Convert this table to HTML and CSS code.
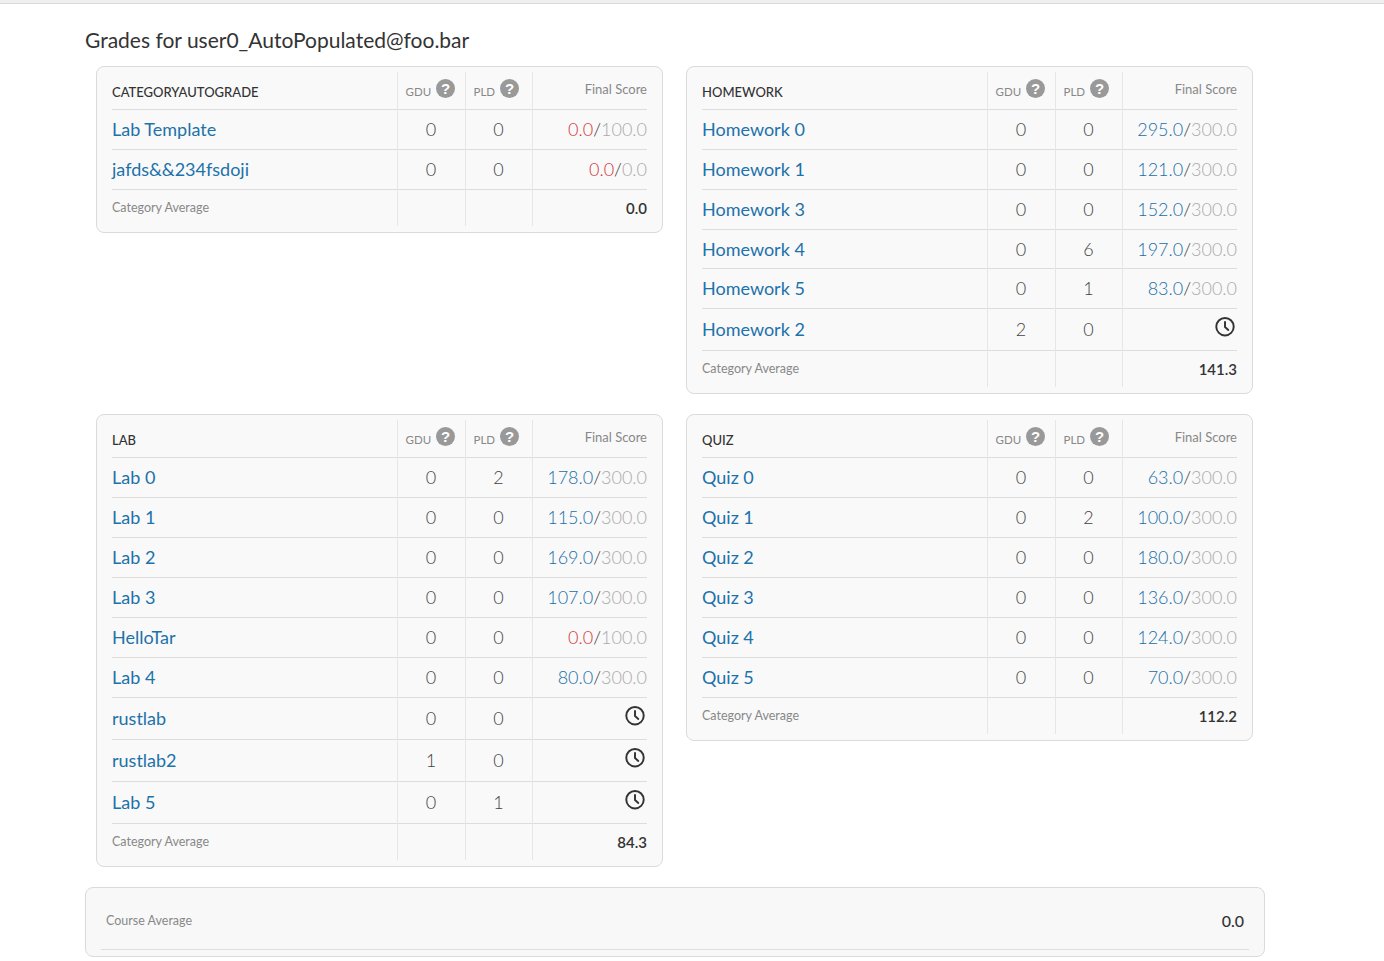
FILE: index.html
```html
<!DOCTYPE html>
<html>
<head>
<meta charset="utf-8">
<title>Grades</title>
<link rel="stylesheet" href="styles.css">
</head>
<body>
<div class="topbar"></div>
<div class="page">
  <h1 class="title">Grades for user0_AutoPopulated@foo.bar</h1>
  <div class="cards">

    <div class="card">
      <table class="grades">
        <colgroup><col class="c-name"><col class="c-gdu"><col class="c-pld"><col class="c-final"></colgroup>
        <thead><tr><th class="cat">CATEGORYAUTOGRADE</th><th class="hint">GDU <span class="q">?</span></th><th class="hint">PLD <span class="q">?</span></th><th class="final">Final Score</th></tr></thead>
        <tbody>
          <tr><td><a>Lab Template</a></td><td class="num">0</td><td class="num">0</td><td class="score"><span class="bad">0.0</span>/<span class="max">100.0</span></td></tr>
          <tr><td><a>jafds&amp;&amp;234fsdoji</a></td><td class="num">0</td><td class="num">0</td><td class="score"><span class="bad">0.0</span>/<span class="max">0.0</span></td></tr>
        </tbody>
        <tfoot><tr><td class="avg-label">Category Average</td><td></td><td></td><td class="avg-val">0.0</td></tr></tfoot>
      </table>
    </div>

    <div class="card">
      <table class="grades">
        <colgroup><col class="c-name"><col class="c-gdu"><col class="c-pld"><col class="c-final"></colgroup>
        <thead><tr><th class="cat">HOMEWORK</th><th class="hint">GDU <span class="q">?</span></th><th class="hint">PLD <span class="q">?</span></th><th class="final">Final Score</th></tr></thead>
        <tbody>
          <tr><td><a>Homework 0</a></td><td class="num">0</td><td class="num">0</td><td class="score"><span class="ok">295.0</span>/<span class="max">300.0</span></td></tr>
          <tr><td><a>Homework 1</a></td><td class="num">0</td><td class="num">0</td><td class="score"><span class="ok">121.0</span>/<span class="max">300.0</span></td></tr>
          <tr><td><a>Homework 3</a></td><td class="num">0</td><td class="num">0</td><td class="score"><span class="ok">152.0</span>/<span class="max">300.0</span></td></tr>
          <tr><td><a>Homework 4</a></td><td class="num">0</td><td class="num">6</td><td class="score"><span class="ok">197.0</span>/<span class="max">300.0</span></td></tr>
          <tr><td><a>Homework 5</a></td><td class="num">0</td><td class="num">1</td><td class="score"><span class="ok">83.0</span>/<span class="max">300.0</span></td></tr>
          <tr><td><a>Homework 2</a></td><td class="num">2</td><td class="num">0</td><td class="score pending"><svg class="clock" viewBox="0 0 24 26" width="24" height="26"><circle cx="12" cy="10" r="9" fill="none" stroke="#333" stroke-width="2"/><path d="M12 5.2V10.4L15.4 13.4" fill="none" stroke="#333" stroke-width="2" stroke-linecap="round" stroke-linejoin="round"/></svg></td></tr>
        </tbody>
        <tfoot><tr><td class="avg-label">Category Average</td><td></td><td></td><td class="avg-val">141.3</td></tr></tfoot>
      </table>
    </div>

    <div class="card">
      <table class="grades">
        <colgroup><col class="c-name"><col class="c-gdu"><col class="c-pld"><col class="c-final"></colgroup>
        <thead><tr><th class="cat">LAB</th><th class="hint">GDU <span class="q">?</span></th><th class="hint">PLD <span class="q">?</span></th><th class="final">Final Score</th></tr></thead>
        <tbody>
          <tr><td><a>Lab 0</a></td><td class="num">0</td><td class="num">2</td><td class="score"><span class="ok">178.0</span>/<span class="max">300.0</span></td></tr>
          <tr><td><a>Lab 1</a></td><td class="num">0</td><td class="num">0</td><td class="score"><span class="ok">115.0</span>/<span class="max">300.0</span></td></tr>
          <tr><td><a>Lab 2</a></td><td class="num">0</td><td class="num">0</td><td class="score"><span class="ok">169.0</span>/<span class="max">300.0</span></td></tr>
          <tr><td><a>Lab 3</a></td><td class="num">0</td><td class="num">0</td><td class="score"><span class="ok">107.0</span>/<span class="max">300.0</span></td></tr>
          <tr><td><a>HelloTar</a></td><td class="num">0</td><td class="num">0</td><td class="score"><span class="bad">0.0</span>/<span class="max">100.0</span></td></tr>
          <tr><td><a>Lab 4</a></td><td class="num">0</td><td class="num">0</td><td class="score"><span class="ok">80.0</span>/<span class="max">300.0</span></td></tr>
          <tr><td><a>rustlab</a></td><td class="num">0</td><td class="num">0</td><td class="score pending"><svg class="clock" viewBox="0 0 24 26" width="24" height="26"><circle cx="12" cy="10" r="9" fill="none" stroke="#333" stroke-width="2"/><path d="M12 5.2V10.4L15.4 13.4" fill="none" stroke="#333" stroke-width="2" stroke-linecap="round" stroke-linejoin="round"/></svg></td></tr>
          <tr><td><a>rustlab2</a></td><td class="num">1</td><td class="num">0</td><td class="score pending"><svg class="clock" viewBox="0 0 24 26" width="24" height="26"><circle cx="12" cy="10" r="9" fill="none" stroke="#333" stroke-width="2"/><path d="M12 5.2V10.4L15.4 13.4" fill="none" stroke="#333" stroke-width="2" stroke-linecap="round" stroke-linejoin="round"/></svg></td></tr>
          <tr><td><a>Lab 5</a></td><td class="num">0</td><td class="num">1</td><td class="score pending"><svg class="clock" viewBox="0 0 24 26" width="24" height="26"><circle cx="12" cy="10" r="9" fill="none" stroke="#333" stroke-width="2"/><path d="M12 5.2V10.4L15.4 13.4" fill="none" stroke="#333" stroke-width="2" stroke-linecap="round" stroke-linejoin="round"/></svg></td></tr>
        </tbody>
        <tfoot><tr><td class="avg-label">Category Average</td><td></td><td></td><td class="avg-val">84.3</td></tr></tfoot>
      </table>
    </div>

    <div class="card">
      <table class="grades">
        <colgroup><col class="c-name"><col class="c-gdu"><col class="c-pld"><col class="c-final"></colgroup>
        <thead><tr><th class="cat">QUIZ</th><th class="hint">GDU <span class="q">?</span></th><th class="hint">PLD <span class="q">?</span></th><th class="final">Final Score</th></tr></thead>
        <tbody>
          <tr><td><a>Quiz 0</a></td><td class="num">0</td><td class="num">0</td><td class="score"><span class="ok">63.0</span>/<span class="max">300.0</span></td></tr>
          <tr><td><a>Quiz 1</a></td><td class="num">0</td><td class="num">2</td><td class="score"><span class="ok">100.0</span>/<span class="max">300.0</span></td></tr>
          <tr><td><a>Quiz 2</a></td><td class="num">0</td><td class="num">0</td><td class="score"><span class="ok">180.0</span>/<span class="max">300.0</span></td></tr>
          <tr><td><a>Quiz 3</a></td><td class="num">0</td><td class="num">0</td><td class="score"><span class="ok">136.0</span>/<span class="max">300.0</span></td></tr>
          <tr><td><a>Quiz 4</a></td><td class="num">0</td><td class="num">0</td><td class="score"><span class="ok">124.0</span>/<span class="max">300.0</span></td></tr>
          <tr><td><a>Quiz 5</a></td><td class="num">0</td><td class="num">0</td><td class="score"><span class="ok">70.0</span>/<span class="max">300.0</span></td></tr>
        </tbody>
        <tfoot><tr><td class="avg-label">Category Average</td><td></td><td></td><td class="avg-val">112.2</td></tr></tfoot>
      </table>
    </div>

  </div>

  <div class="course">
    <table class="course-table">
      <tr><td class="course-label">Course Average</td><td class="course-val">0.0</td></tr>
    </table>
  </div>
</div>
</body>
</html>
```

FILE: styles.css
```css
* { box-sizing: border-box; }

html, body {
  margin: 0;
  padding: 0;
  background: #ffffff;
  font-family: "Lato", "Noto Sans", "Liberation Sans", sans-serif;
  color: #333333;
}

.topbar {
  height: 4px;
  background: #efefef;
  border-bottom: 1px solid #d9d9d9;
}

.page {
  width: 1180px;
  margin-left: 85px;
}

.title {
  margin: 22px 0 12px 0;
  font-size: 21px;
  line-height: 28px;
  font-weight: 400;
  color: #333333;
}

.cards {
  display: grid;
  grid-template-columns: 567px 567px;
  column-gap: 23px;
  row-gap: 20px;
  align-items: start;
  margin-left: 11px;
}

.card {
  background: #f9f9f9;
  border: 1px solid #dadada;
  border-radius: 8px;
  padding: 5px 15px 6px 15px;
}

.grades {
  width: 100%;
  table-layout: fixed;
  border-collapse: collapse;
}

.c-name { width: 285px; }
.c-gdu { width: 68px; }
.c-pld { width: 67px; }
.c-final { width: 115px; }

.grades th,
.grades td {
  padding: 8px 8px;
  vertical-align: middle;
  white-space: nowrap;
}

.grades th + th,
.grades td + td {
  border-left: 1px solid #e6e6e6;
}

.grades th:first-child,
.grades td:first-child { padding-left: 0; }

.grades th:last-child,
.grades td:last-child { padding-right: 0; }

.grades thead tr,
.grades tbody tr {
  border-bottom: 1px solid #dddddd;
}

.grades th {
  text-align: left;
  font-weight: 400;
  line-height: 20px;
  height: 37px;
}

.grades th.cat {
  font-size: 13px;
  color: #333333;
  font-weight: 500;
  padding-top: 10px;
  padding-bottom: 7px;
}

.grades th.hint {
  font-size: 11.5px;
  color: #888888;
  padding-top: 10px;
  padding-bottom: 7px;
}

.q {
  display: inline-block;
  width: 19px;
  height: 19px;
  border-radius: 50%;
  background: #999999;
  color: #ffffff;
  font-family: "Liberation Sans", sans-serif;
  font-size: 15px;
  font-weight: 700;
  line-height: 19px;
  text-align: center;
  vertical-align: 2px;
  margin: -6px 0 -6px 2px;
}

.grades th.final {
  text-align: right;
  font-size: 13px;
  color: #888888;
  padding-top: 7px;
  padding-bottom: 10px;
}

.grades tbody td {
  font-size: 18px;
  line-height: 22.86px;
  font-weight: 300;
}

.grades a {
  color: #1c72aa;
  font-weight: 400;
  text-decoration: none;
}

.grades td.num {
  text-align: center;
  color: #444444;
}

.grades td.score {
  text-align: right;
  color: #333333;
  font-weight: 300;
}

.ok { color: #1a6fa8; }
.bad { color: #d0373b; }
.max { color: #aaaaaa; }

.grades td.pending {
  line-height: 0;
}

.clock {
  display: block;
  margin-left: auto;
  height: 25.2px;
}

.grades tfoot td {
  line-height: 20px;
  height: 36px;
}

.avg-label {
  font-size: 12.5px;
  color: #888888;
}

.avg-val {
  text-align: right;
  font-size: 15px;
  font-weight: 600;
  color: #333333;
}

.course {
  margin-top: 20px;
  background: #f8f8f8;
  border: 1px solid #dadada;
  border-radius: 8px;
  padding: 5px 15px 6px 15px;
}

.course-table {
  width: 100%;
  border-collapse: collapse;
}

.course-table tr {
  border-bottom: 1px solid #dddddd;
}

.course-table td {
  padding: 16px 5px;
  line-height: 24px;
  vertical-align: middle;
}

.course-label {
  font-size: 12.5px;
  color: #888888;
}

.course-val {
  text-align: right;
  font-size: 16px;
  font-weight: 500;
  color: #333333;
}
```
